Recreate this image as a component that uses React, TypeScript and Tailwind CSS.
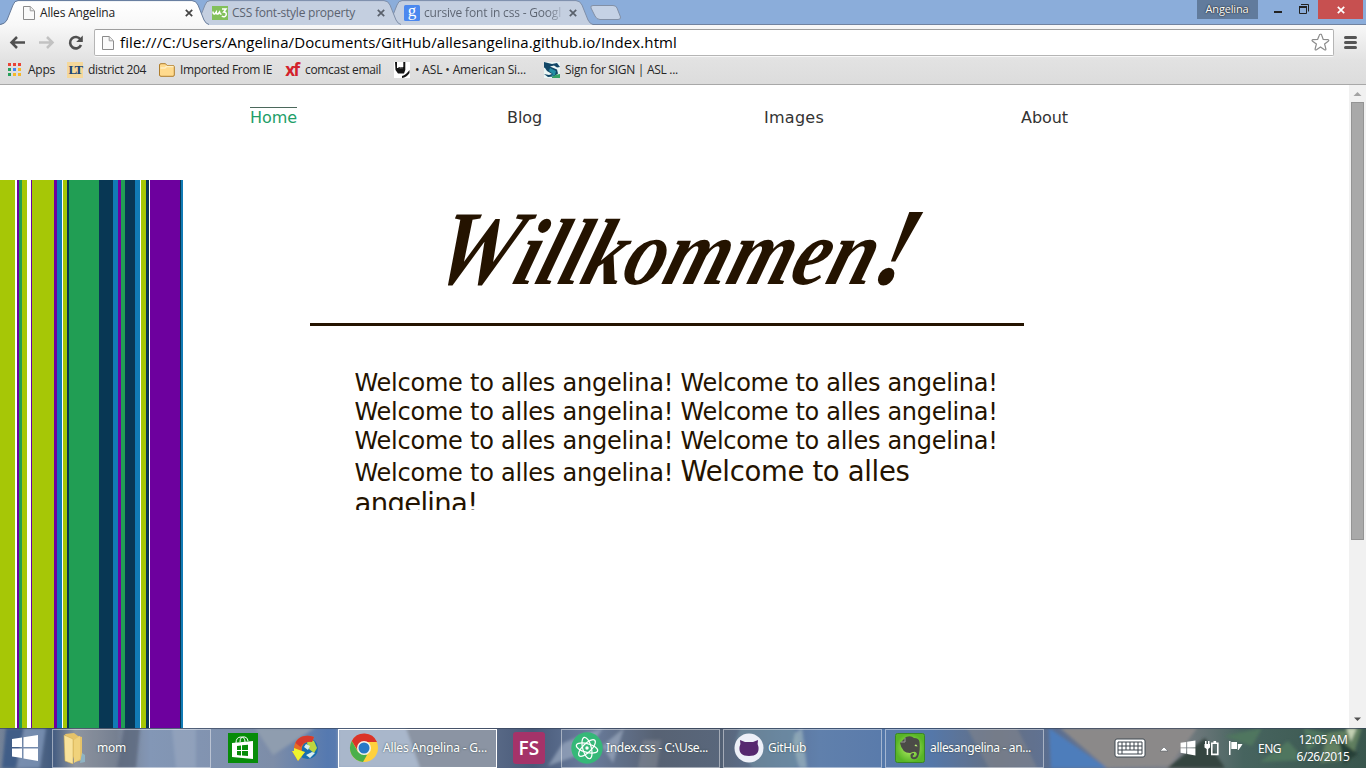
import React, { useLayoutEffect, useRef, useState } from 'react';

/** Single-line text whose tracking is adjusted so that it fills a given width. */
function Fit({ w, children, className = '' }: { w: number; children: string; className?: string }) {
  const ref = useRef<HTMLSpanElement>(null);
  const [spacing, setSpacing] = useState(0);
  useLayoutEffect(() => {
    if (ref.current) {
      const natural = ref.current.getBoundingClientRect().width - spacing * children.length;
      setSpacing((w - natural) / children.length);
    }
  }, [w, children]);
  return (
    <span ref={ref} className={`inline-block shrink-0 whitespace-pre ${className}`} style={{ letterSpacing: `${spacing}px` }}>
      {children}
    </span>
  );
}

const PageIcon = ({ className = '' }: { className?: string }) => (
  <svg width="12" height="14" viewBox="0 0 12 14" className={`shrink-0 ${className}`}>
    <path d="M.5.5h6.7L11.500 4.800v8.700H.5z" fill="#fafafa" stroke="#8b8b8b" />
    <path d="M7.200.8v4h4" fill="#eee" stroke="#9b9b9b" />
  </svg>
);

function Tab({ active = false, icon, title, w, className = '' }: { active?: boolean; icon: React.ReactNode; title: string; w: number; className?: string }) {
  return (
    <div className={`relative h-[25px] w-[209px] shrink-0 ${className}`}>
      <svg className="absolute inset-0" width="209" height="25" viewBox="0 0 209 25">
        <defs>
          <linearGradient id="tabfill" x2="0" y2="1"><stop stopColor="#fff" /><stop offset="1" stopColor="#f8f8f8" /></linearGradient>
        </defs>
        <path d="M0 25Q5 24 7 20L13 5Q14.500 1 18 1H192Q196 1 198 5L204 20Q206 24 209 25Z" fill={active ? 'url(#tabfill)' : '#c4cfe0'} />
        <path d="M0 24.500Q5 24 7 20L13 5Q14.500 .6 18 .6H192Q196 .6 198 5L204 20Q206 24 209 24.500" fill="none" stroke={active ? '#667b9b' : '#7f8fa9'} />
      </svg>
      <div className="relative flex h-[25px] items-center pt-px pl-[20px]">
        <span className="flex w-[20px] shrink-0">{icon}</span>
        <Fit w={w} className={active ? 'text-[12px] leading-4 text-[#222]' : 'text-[12px] leading-4 text-[#5b6370]'}>{title}</Fit>
      </div>
      <svg className="absolute top-[9px] left-[185px]" width="8" height="8" viewBox="0 0 8 8"><path d="M.8.8l6.400 6.400M7.200.8L.8 7.200" stroke={active ? '#444' : '#59606b'} strokeWidth="1.700" /></svg>
    </div>
  );
}

const GoogleIcon = () => (
  <span className="flex h-4 w-4 items-center justify-center rounded-[1.500px] bg-[#4b88ef] font-['Liberation_Serif',serif] text-[17px] leading-[10px] text-white"><span className="-mt-[5px]">g</span></span>
);
const W3Icon = () => (
  <svg width="16" height="14" viewBox="0 0 16 14"><rect width="16" height="14" fill="#83c05b" /><path d="M1 5.500q0 3 1.700 2.500L4.300 6q0 2.500 1.700 2L7.500 6q.5 2.500 2 2M10 3h4l-2.300 3q3 0 2.500 3-1.500 3-4.400 1" fill="none" stroke="#fff" strokeWidth="1.500" /></svg>
);

function TabStrip() {
  return (
    <div className="flex h-[25px] items-start bg-[#8badda] shadow-[inset_0_-1px_#70829f]">
      <Tab active className="z-20" icon={<PageIcon className="ml-[3px]" />} title="Alles Angelina" w={75} />
      <Tab className="z-10 -ml-[17px]" icon={<W3Icon />} title="CSS font-style property" w={123} />
      <Tab className="-ml-[17px] [&_span.inline-block]:bg-[linear-gradient(90deg,#5b6370_90%,#aab4c4)] [&_span.inline-block]:bg-clip-text [&_span.inline-block]:text-transparent" icon={<GoogleIcon />} title="cursive font in css - Googl" w={137} />
      <svg className="mt-[4px] -ml-[5px]" width="34" height="18" viewBox="0 0 34 18"><path d="M5 1.500H25Q28 1.500 29 4L32.500 13Q33 15.500 30 15.500H12Q8.500 15.500 7 12L3 4Q2 1.500 5 1.500Z" fill="#c5d2e5" stroke="#8290a6" /></svg>
      <div className="flex-1" />
      <div className="flex h-[19px] w-[61px] items-center justify-center bg-[#617b9c] pr-px pb-px text-[11px] leading-4 text-white [text-shadow:0_0_2px_#222,0_0_1px_#222]"><Fit w={43}>Angelina</Fit></div>
      <svg className="h-[19px] w-[60px]" viewBox="0 0 60 19"><path d="M16 11h8v2h-8z" fill="#222" /><path d="M41.500 6.500h7v7h-7z" fill="none" stroke="#222" /><path d="M41 6h8v2h-8z" fill="#222" /><path d="M43 4.500h7.500v7" fill="none" stroke="#222" /></svg>
      <div className="flex h-[19px] w-[45px] items-center justify-center bg-[#c75050]"><svg width="8" height="8" viewBox="0 0 8 8"><path d="M.8.8l6.400 6.400M7.200.8L.8 7.200" stroke="#fff" strokeWidth="1.700" /></svg></div>
      <div className="w-[3px]" />
    </div>
  );
}

function AddressRow() {
  return (
    <div className="flex h-[33px] items-center">
      <svg width="94" height="33" viewBox="0 0 94 33" fill="none">
        <path d="M25 17.500H12M17 12l-5.500 5.500L17 23" stroke="#505050" strokeWidth="2.500" />
        <path d="M39 17.500h13M47 12l5.500 5.500L47 23" stroke="#c2c2c2" strokeWidth="2.500" />
        <path d="M80.500 14.500A5.700 5.700 0 1 0 81 20" stroke="#505050" strokeWidth="2.600" />
        <path d="M82.800 10.500v6.500h-6.600z" fill="#505050" />
      </svg>
      <div className="mt-[2px] flex h-[27px] w-[1240px] items-center rounded-[2px] border border-[#b5b5b5] border-t-[#9e9e9e] bg-white pl-[7px] shadow-[0_1px_#f8f8f8]">
        <PageIcon />
        <Fit w={557} className="mb-[2px] ml-[6px] text-[15px] leading-5 text-black">file:///C:/Users/Angelina/Documents/GitHub/allesangelina.github.io/Index.html</Fit>
        <div className="flex-1" />
        <svg className="mr-[3px]" width="19" height="19" viewBox="0 0 19 19"><path d="M9.500 1.200Q10.500 1 11 3l1.200 3.500 5 .2q1.200.5 0 1.500L13.600 11l1.300 5q0 1.500-1.400.8L9.500 14l-4 2.800q-1.400.7-1.400-.8l1.300-5-3.800-2.800q-1.200-1 0-1.500l5-.2L8 3q.5-1.800 1.500-1.800Z" fill="#fff" stroke="#8b8b8b" strokeWidth="1.200" /></svg>
      </div>
      <svg className="ml-[10px]" width="13" height="33" viewBox="0 0 13 33"><path d="M1.500 12.500h10M1.500 17.500h10M1.500 22.500h10" stroke="#555" strokeWidth="3" strokeLinecap="round" /></svg>
    </div>
  );
}

const label = 'text-[12px] leading-4 text-[#262626]';

function BookmarksBar() {
  const cells = ['#e94436', '#e94436', '#e94436', '#28a05b', '#4285f4', '#f6b82a', '#28a05b', '#f6b82a', '#f6b82a'];
  return (
    <div className="flex h-[26px] items-center pb-[3px] pl-2">
      <div className="mr-[7px] grid grid-cols-[3px_3px_3px] gap-[2px]">
        {cells.map((c, i) => <i key={i} className="h-[3px] w-[3px]" style={{ background: c }} />)}
      </div>
      <Fit w={27} className={label}>Apps</Fit>
      <span className="mr-[5px] ml-[12px] flex h-4 w-4 items-center justify-center bg-[#f5d89a] font-['Liberation_Serif',serif] text-[13px] leading-4 font-bold tracking-[-1.500px] text-[#194475]">LT</span>
      <Fit w={58} className={label}>district 204</Fit>
      <svg className="mr-[5px] ml-[13px]" width="16" height="14" viewBox="0 0 16 14"><path d="M.5 12V2Q.5.7 2 .7h4.500L8 2.500h6q1.300 0 1.300 1.300V12q0 1.300-1.300 1.300H2Q.5 13.300.5 12Z" fill="#ffda8d" stroke="#af7d2c" /><path d="M1.500 5H6l1.500-1.500h7" fill="none" stroke="#fff0c5" strokeWidth="1.300" /></svg>
      <Fit w={92} className={label}>Imported From IE</Fit>
      <span className="mr-[5px] ml-[12px] flex h-4 w-4 items-center justify-center text-[17px] leading-4 font-bold tracking-[-1.500px] text-[#d3222b]">xf</span>
      <Fit w={76} className={label}>comcast email</Fit>
      <svg className="mr-[5px] ml-[13px]" width="16" height="16" viewBox="0 0 16 16"><path fill="#fff" d="M0 0h16v16H0z" /><path d="M1 0h2v6h1.500V5h1.300v1.500h.6V5h1.300v1.500h.6V5h1V0h2v8L10 11.500H4L1.500 8ZM8 16v-2q4-1 7.500-6v3q-3 4.500-7.500 5Z" fill="#151515" /></svg>
      <Fit w={111} className={label}>• ASL • American Si...</Fit>
      <svg className="mr-[5px] ml-[18px]" width="16" height="16" viewBox="0 0 16 16"><path fill="#eaf6f5" d="M0 0h16v16H0z" /><path d="M0 0l8 2 5-1 3 4-3 .5-3-2-4 1 7 3 1 4-4 3-6 .5-4-3 5 1 3-1-5-3-2-3-4-2Z" fill="#124767" /><path d="M6 6l6 3-1 4-5 2 3-3-4-3Z" fill="#238fa4" /><path d="M8 15q4-3 8-3v4H8Z" fill="#35a165" /></svg>
      <Fit w={113} className={label}>Sign for SIGN | ASL ...</Fit>
    </div>
  );
}

const STRIPES: [number, string][] = [
  [15, '#a6c706'], [2, '#fff'], [2, '#6d009e'], [3, '#219e54'], [5, '#a6c706'], [4, '#fff'], [1, '#6d009e'], [22, '#a6c706'],
  [3, '#6d009e'], [5, '#117bb5'], [1, '#fff'], [4, '#a6c706'], [2, '#083754'], [30, '#219e54'], [14, '#083754'], [5, '#117bb5'],
  [3, '#6d009e'], [4, '#219e54'], [10, '#083754'], [5, '#117bb5'], [1, '#fff'], [5, '#a6c706'], [3, '#083754'], [1, '#fff'],
  [30, '#6d009e'], [1, '#083754'], [2, '#117bb5'],
];

function Site() {
  const pair = (
    <div className="h-[29px] leading-[29px]"><Fit w={326}>{'Welcome to alles angelina! '}</Fit><Fit w={317}>Welcome to alles angelina!</Fit></div>
  );
  return (
    <main className="flex min-w-0 flex-1 flex-col bg-white font-['DejaVu_Sans',sans-serif] text-[#241300]">
      <nav className="flex h-[95px] pt-[22px] pl-[250px] text-[16px] leading-5 text-[#333]">
        <div className="w-[257px]"><Fit w={47} className="border-t border-[#4b685b] text-[#219e68]">Home</Fit></div>
        <div className="w-[257px] pt-px"><Fit w={35}>Blog</Fit></div>
        <div className="w-[257px] pt-px"><Fit w={60}>Images</Fit></div>
        <div className="pt-px"><Fit w={47}>About</Fit></div>
      </nav>
      <div className="flex flex-1">
        <div className="flex w-[183px]">
          {STRIPES.map(([w, c], i) => <i key={i} className="h-full" style={{ width: w, background: c }} />)}
        </div>
        <div className="ml-[127px] w-[714px]">
          <h1 className="flex h-[146px] items-start border-b-[3px] border-[#241300] pt-[7px] pl-[109px] font-['Brush_Script_MT','Liberation_Serif',cursive] leading-[120px] font-bold italic">
            <span className="inline-block origin-bottom-left -skew-x-[20deg] scale-x-[.87] text-[94px] whitespace-nowrap"><span className="text-[106px]">W</span>illkommen<span className="text-[110px]">!</span></span>
          </h1>
          <div className="mt-[43px] ml-[44.500px] h-[141px] overflow-hidden text-[24px] whitespace-nowrap">
            {pair}{pair}{pair}
            <div className="flex h-[32px] items-baseline leading-[31px]"><Fit w={326}>{'Welcome to alles angelina! '}</Fit><Fit w={229} className="text-[27.500px]">Welcome to alles</Fit></div>
            <div className="text-[27.500px] leading-[31px]"><Fit w={123}>angelina!</Fit></div>
          </div>
        </div>
      </div>
    </main>
  );
}

function Scrollbar() {
  return (
    <div className="flex w-[17px] flex-col items-center bg-[#f1f1f1]">
      <svg width="17" height="17" viewBox="0 0 17 17"><path d="M4.500 11L8.500 7l4 4z" fill="#a3a3a3" /></svg>
      <div className="h-[438px] w-[13px] border border-[#949494] bg-[#a9a9a9]" />
      <div className="flex-1" />
      <svg width="17" height="17" viewBox="0 0 17 17"><path d="M5 6.500h7L8.500 10z" fill="#505050" /></svg>
    </div>
  );
}

const Windows = ({ s }: { s: number }) => (
  <svg width={s} height={s} viewBox="0 0 28 28" fill="#fff"><path d="M1 5l10-1.500V13H1zM12.500 3.200L27 1v12H12.500zM1 14.500h10V24L1 22.500zM12.500 14.500H27V27l-14.500-2.500z" /></svg>
);

const taskText = "font-['Noto_Sans','Open_Sans',sans-serif] text-[12px] leading-4 text-white [text-shadow:0_0_2px_#344]";

function Task({ icon, title, w, active = false, className = '' }: { icon: React.ReactNode; title: string; w: number; active?: boolean; className?: string }) {
  return (
    <div className={`flex h-[39px] w-[159px] shrink-0 items-center border ${active ? 'border-white bg-white/25' : 'border-white/45 bg-slate-400/10'} ${className}`}>
      <span className="flex w-[44px] shrink-0 items-center justify-start pl-[9px]">{icon}</span>
      <Fit w={w} className={taskText}>{title}</Fit>
    </div>
  );
}

function Taskbar() {
  return (
    <footer className="relative h-[40px] overflow-hidden bg-[#758baa]">
      <svg className="absolute inset-0" width="1366" height="40" viewBox="0 0 1366 40" preserveAspectRatio="none">
        <defs>
          <linearGradient id="wall"><stop stopColor="#758398" /><stop offset=".04" stopColor="#40597d" /><stop offset=".055" stopColor="#8e949d" /><stop offset=".085" stopColor="#737d8d" /><stop offset=".11" stopColor="#8297b6" /><stop offset=".2" stopColor="#7d8da8" /><stop offset=".24" stopColor="#5579b0" /><stop offset=".3" stopColor="#7b8ba4" /><stop offset=".39" stopColor="#495a79" /><stop offset=".43" stopColor="#65799a" /><stop offset=".48" stopColor="#515c6c" /><stop offset=".53" stopColor="#536175" /><stop offset=".6" stopColor="#5b7dab" /><stop offset=".68" stopColor="#4e74a9" /><stop offset=".73" stopColor="#606b7c" /><stop offset=".77" stopColor="#5a6e91" /><stop offset=".86" stopColor="#7d8087" /><stop offset=".91" stopColor="#47645f" /><stop offset="1" stopColor="#39564d" /></linearGradient>
          <filter id="soft"><feGaussianBlur stdDeviation="1.500" /></filter>
        </defs>
        <path fill="url(#wall)" d="M0 0h1366v40H0z" />
        <g filter="url(#soft)">
          <path d="M6 0h18l-8 40H2z" fill="#415d87" /><path d="M24 0h22L40 40H17z" fill="#7d95b8" opacity=".8" />
          <path d="M124 0h16l-4 40h-19z" fill="#566175" opacity=".8" /><path d="M172 0h24v40h-20z" fill="#a0afc5" opacity=".5" />
          <path d="M255 0h60l-42 27z" fill="#8f9daf" /><path d="M338 0h68l14 40h-82z" fill="#8c9fba" /><path d="M406 0h90v40h-76z" fill="#657184" />
          <path d="M548 38l15-23 28-11 12-4-16 24zM602 18l22-18-11 35z" fill="#b6c3d5" opacity=".5" />
          <path d="M643 12h18l-4 28h-19z" fill="#8a8d94" opacity=".5" /><path d="M740 0h54l7 18-4 22h-45l-16-28z" fill="#7397a4" opacity=".5" /><path d="M795 5l7-5 5 40h-8l-6-26z" fill="#a8c2c5" opacity=".6" />
          <path d="M967 0h50l20 40h-48z" fill="#7e8288" opacity=".6" />
          <path d="M1049 0l58 40h-56z" fill="#4d7dbb" /><path d="M1060 0h137l-28 38-62 2z" fill="#8b8989" /><path d="M1110 40h57l38-30 20 30z" fill="#34443f" />
          <path d="M1224 8l38-8-10 18zM1260 34l28-21 17 19zM1304 0l26 7-23 16z" fill="#4f765f" /><path d="M1328 5l34-5-10 31-32 4z" fill="#86a66e" opacity=".5" /><path d="M1338 10l20 16-14 10z" fill="#284139" /><path d="M1346 0h11l-6 14z" fill="#c3d0b2" />
        </g>
        <path d="M0 0h1366v1H0z" fill="#344157" opacity=".65" />
      </svg>
      <div className="relative flex h-full items-center">
        <div className="flex w-[52px] shrink-0 pl-[11px]"><Windows s={28} /></div>
        <Task title="mom" w={29} icon={<svg width="25" height="32" viewBox="0 0 25 32"><path d="M3 2l9-1 4 3 4 1v23l-7 2z" fill="#e6c369" /><path d="M2 3l9 4v25l-8-3z" fill="#f8e29b" stroke="#caa951" strokeWidth=".5" /><path d="M12 8l6-4v23l-6 4z" fill="#f0d27b" /><path d="M20 21l3 2v7l-5 1z" fill="#8eb3c3" /></svg>} />
        <svg className="ml-[17px] shrink-0" width="30" height="30" viewBox="0 0 30 30"><path fill="#078c09" d="M0 0h30v30H0z" /><path d="M4 10l21-2v18L4 24z" fill="#fff" /><path d="M8 10Q8 4 13 4q4 0 4 5M12 9q0-6 5-5 3 1 3 4" fill="none" stroke="#fff" /><path d="M9 13l4-.5V17H9zM14 12.300l6-.6V17h-6zM9 18h4v4.500L9 22zM14 18h6v5l-6-.5z" fill="#078c09" /></svg>
        <svg className="ml-[34px] shrink-0" width="28" height="28" viewBox="0 0 28 28"><circle cx="15.500" cy="14.500" r="10.500" fill="#196eae" /><path d="M17 5l5 2 3 7-3 5-5-4-2-6z" fill="#bdd63f" /><path d="M14 10l4 2-2 4-4-3M20 18l3 1-5 5-4-3z" fill="#d8eeee" /><path d="M22 3C11-1 1 5 2 17L0 17l6 10 7-9-3-.5C9 11 13 7 20 8Z" fill="#e86b24" /><path d="M22 3C13 0 6 3 3.500 9l5 4Q12 7 20 8Z" fill="#d63a2d" /><path d="M0 17h2V14l8 3 3 1-7 9Z" fill="#eef52d" /></svg>
        <Task active className="ml-[18px]" title="Alles Angelina - G..." w={104} icon={<svg className="ml-px" width="30" height="30" viewBox="0 0 30 30"><circle cx="15" cy="15" r="14" fill="#ffd13d" /><path d="M2.800 8A14 14 0 0 1 28 9H15L9 18z" fill="#db3328" /><path d="M2.800 8L9 19l9 3-4 7A14 14 0 0 1 2.800 8Z" fill="#4aaf4c" /><circle cx="15" cy="15" r="7" fill="#f6f4ed" /><circle cx="15" cy="15" r="5.500" fill="#2879c7" /></svg>} />
        <div className="ml-[16px] flex h-8 w-8 shrink-0 items-center justify-center rounded-[3px] bg-[#a53369] text-[19px] leading-8 font-semibold text-white"><Fit w={21}>FS</Fit></div>
        <Task className="ml-[16px]" title="Index.css - C:\Use..." w={102} icon={<svg width="32" height="32" viewBox="0 0 32 32"><circle cx="16" cy="16" r="15.700" fill="#35b878" /><g fill="none" stroke="#fff" strokeWidth="1.200"><ellipse cx="16" cy="16" rx="11" ry="4.300" transform="rotate(15 16 16)" /><ellipse cx="16" cy="16" rx="11" ry="4.300" transform="rotate(75 16 16)" /><ellipse cx="16" cy="16" rx="11" ry="4.300" transform="rotate(135 16 16)" /></g><circle cx="16" cy="16" r="1.700" fill="#fff" /></svg>} />
        <Task className="ml-[3px]" title="GitHub" w={38} icon={<svg className="ml-px" width="30" height="30" viewBox="0 0 30 30"><circle cx="15" cy="15" r="14.500" fill="#edf0f8" /><path d="M6 7l5 2h8l5-2q-1 4 .5 7 1 9-9.500 9T5.500 14Q7 11 6 7Z" fill="#56286f" /></svg>} />
        <Task className="ml-[3px]" title="allesangelina - an..." w={101} icon={<svg width="30" height="30" viewBox="0 0 30 30"><defs><radialGradient id="en"><stop stopColor="#b9f168" /><stop offset="1" stopColor="#58b526" /></radialGradient></defs><rect x=".5" y=".5" width="29" height="29" rx="2" fill="url(#en)" stroke="#398624" /><path d="M5 10l6-6q5-2 8 1 5 0 5.500 4 1 9-1.500 15-3 4-7 1-2-5 3-5v2q-2 0-1 2 3 1 4-3-1-3-4-2l-3 1q-8 0-10-10z" fill="#4b4b47" /><path d="M6 9h4V5" fill="none" stroke="#999" /><path d="M19.500 13q1.500-3 3 .5z" fill="#b9ee77" /></svg>} />
        <svg className="ml-[70px] shrink-0" width="32" height="20" viewBox="0 0 32 20"><rect x="1" y="1" width="30" height="18" rx="2" fill="#fff" stroke="#414a52" /><path d="M4 4h24v12H4zM4 8h24M4 12h24M8 4v8M12 4v8M16 4v8M20 4v8M24 4v8M8 12v4M24 12v4" fill="none" stroke="#3d444c" /></svg>
        <svg className="ml-[12px] shrink-0" width="12" height="10" viewBox="0 0 12 10"><path d="M2 8l4-4 4 4z" fill="#fff" stroke="#485059" strokeWidth=".5" /></svg>
        <div className="ml-[10px] shrink-0"><Windows s={16} /></div>
        <svg className="ml-[8px] shrink-0" width="16" height="16" viewBox="0 0 16 16"><path d="M1 1h1.500v3H4V1h1.500v3H6v3.500L4.200 9v6H2.700V9L.5 7.500V4H1z" fill="#fff" /><path d="M7.800 3.200h6v11.200h-6zM9.500 1.700h2.600" fill="none" stroke="#fff" strokeWidth="1.600" /></svg>
        <svg className="ml-[8px] shrink-0" width="16" height="16" viewBox="0 0 16 16" fill="#fff"><path d="M1 1h1.500v14H1zM3.300 2H9v7H3.300zM9.800 4h4.700L13 6.500 10.500 10H9.800z" /></svg>
        <div className="mb-[2px] ml-[14px]"><Fit w={23} className={taskText}>ENG</Fit></div>
        <div className={`ml-[14px] flex w-[56px] shrink-0 flex-col items-center ${taskText}`}>
          <Fit w={49} className="mt-px">12:05 AM</Fit><Fit w={53} className="mt-px">6/26/2015</Fit>
        </div>
      </div>
    </footer>
  );
}

export default function App() {
  return (
    <div className="flex h-[768px] w-[1366px] flex-col overflow-hidden font-['Open_Sans','Noto_Sans',sans-serif]">
      <header className="h-[85px] shrink-0 border-b border-[#a8a8a8] bg-[#ddd]">
        <TabStrip />
        <div className="h-[59px] bg-linear-to-b from-[#f8f8f8] from-0% via-[#e2e2e2] via-60% to-[#dcdcdc]">
          <AddressRow />
          <BookmarksBar />
        </div>
      </header>
      <div className="flex h-[643px] shrink-0"><Site /><Scrollbar /></div>
      <Taskbar />
    </div>
  );
}
